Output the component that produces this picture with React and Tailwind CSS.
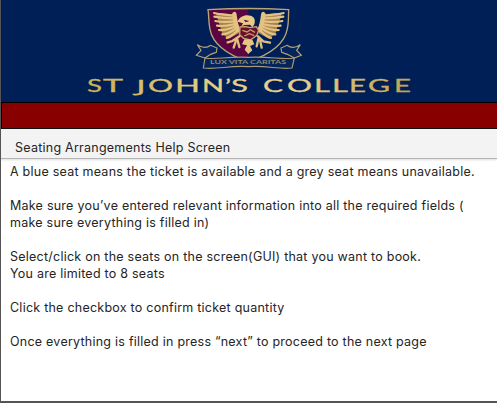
const lines = [
  "A blue seat means the ticket is available and a grey seat means unavailable.",
  "",
  "Make sure you’ve entered relevant information into all the required fields (",
  "make sure everything is filled in)",
  "",
  "Select/click on the seats on the screen(GUI) that you want to book.",
  "You are limited to 8 seats",
  "",
  "Click the checkbox to confirm ticket quantity",
  "",
  "Once everything is filled in press “next” to proceed to the next page",
];

// Feathers of the left wing; the right wing is the same set mirrored.
function Wing() {
  return (
    <g fill="none" stroke="#e3c381" strokeLinecap="round">
      <path d="M136 44L80 38L100 101L118 116L150 100L152 84Z" fill="#a98250" stroke="none" />
      <g strokeWidth="6.5">
        <path d="M136 47C112 44 91 43 75 39" />
        <path d="M132 55C109 55 91 53 76 50" />
        <path d="M133 64C110 67 92 66 79 63" />
        <path d="M134 73C113 78 98 79 84 77" />
        <path d="M136 80C118 88 104 91 90 90" />
        <path d="M139 87C124 97 113 102 100 103" />
        <path d="M143 94C131 105 122 111 113 114" />
      </g>
      <path d="M136 42C138 50 138 70 147 90" strokeWidth="13" />
    </g>
  );
}

function Crest() {
  return (
    <svg viewBox="0 0 360 225" className="h-[75px] w-[120px]">
      <path d="M57 29Q116 26 178 25V184C130 169 65 137 61 82Z" fill="#5b0642" />
      <path d="M57 29Q178 22 299 29C298 54 299 70 295 86C286 139 227 169 178 185C130 169 73 142 63 88C58 65 60 46 57 29Z" fill="none" stroke="#b9a577" strokeWidth="4" />
      <Wing />
      <g transform="translate(359 0) scale(-1 1)">
        <Wing />
      </g>
      <path d="M146 65C151 49 169 42 185 47C196 50 200 60 196 73L190 82L183 74L167 75L157 79L162 70Z" fill="#e9ca88" />
      <path d="M164 59L181 63L170 67Z" fill="#5b0642" />
      <path d="M153 81L171 80L183 83L202 80L209 91L203 107L184 120L164 115L152 104Z" fill="#69102f" stroke="#cda66d" strokeWidth="4" />
      <path d="M160 91L174 96L184 89L198 97M166 108L181 101L196 107" fill="none" stroke="#c79d68" strokeWidth="4" />
      <path d="M151 109L130 123L116 127M142 119L134 143M145 118L151 141M207 109L223 124L243 128M213 119L218 143M208 117L203 139" fill="none" stroke="#dfbe7d" strokeWidth="7" strokeLinecap="round" />
      <path d="M166 118L190 119L196 133L183 138L190 151L178 162L167 149L174 136L159 133Z" fill="#e5c582" />
      <path d="M48 174C80 180 110 169 178 172C246 169 280 180 316 174L309 204C269 209 235 196 178 200C120 196 86 209 43 204Z" fill="#06245c" stroke="#a99a72" strokeWidth="3.5" />
      <path d="M48 174L22 166L36 151L25 134C39 144 53 145 65 136L84 144L82 157L65 163L48 174M316 174L337 166L323 151L334 134C320 144 306 145 294 136L276 144L278 157L295 163L316 174" fill="#06245c" stroke="#b2a27a" strokeWidth="3.5" />
      <text x="63" y="193" textLength="228" lengthAdjust="spacingAndGlyphs" className="fill-[#8e8870] font-['Lato',sans-serif] text-[14px] font-bold">LUX VITA CARITAS</text>
    </svg>
  );
}

// Each letter of the wordmark with its left edge and extended width.
const letters = [
  ["S", 3, 15], ["T", 19, 20],
  ["J", 52, 10], ["O", 64, 25], ["H", 91, 25], ["N", 118, 22], ["’", 141, 6], ["S", 147, 17],
  ["C", 179, 20], ["O", 203, 25], ["L", 230, 16], ["L", 248, 16], ["E", 265, 17], ["G", 284, 22], ["E", 310, 17],
];

function Wordmark() {
  return (
    <svg viewBox="0 0 330 20" className="h-[20px] w-[330px] overflow-visible font-['Lato',sans-serif] text-[17px]">
      <defs>
        <linearGradient id="gold" gradientUnits="userSpaceOnUse" x1="0" y1="0" x2="330" y2="0">
          <stop stopColor="#c9b052" />
          <stop offset=".42" stopColor="#e8d08a" />
          <stop offset=".65" stopColor="#ead18e" />
          <stop offset="1" stopColor="#bfa34b" />
        </linearGradient>
      </defs>
      <g fill="url(#gold)" stroke="url(#gold)" strokeWidth=".3">
        {letters.map(([ch, x, w]) => (
          <text key={x} x={x} y="16.5" textLength={w} lengthAdjust="spacingAndGlyphs" className={ch === "J" ? "font-['Open_Sans',sans-serif]" : undefined}>{ch}</text>
        ))}
      </g>
    </svg>
  );
}

export default function App() {
  return (
    <div className="flex h-[403px] w-[497px] flex-col overflow-hidden border-b-2 border-l border-[#555355] bg-white font-['Inter',sans-serif] text-[12.5px] text-[#252525]">
      <header className="flex h-[102px] shrink-0 flex-col items-center bg-[#001f57]">
        <Crest />
        <Wordmark />
      </header>
      <div className="h-[27px] shrink-0 border border-r-0 border-black bg-[#880000]" />
      <div className="flex h-[30px] shrink-0 items-center border-b border-[#b4b4b4] bg-[#f3f3f3] pt-[8px] pl-[14px] leading-[17px] tracking-[0.24px] shadow-[0_1px_2px_#dddddd]">
        Seating Arrangements Help Screen
      </div>
      <main className="pt-[4px] pl-[9px] leading-[17px] tracking-[0.24px]">
        {lines.map((line, i) => (
          <p key={i} className="h-[17px] whitespace-nowrap">{line}</p>
        ))}
      </main>
    </div>
  );
}
